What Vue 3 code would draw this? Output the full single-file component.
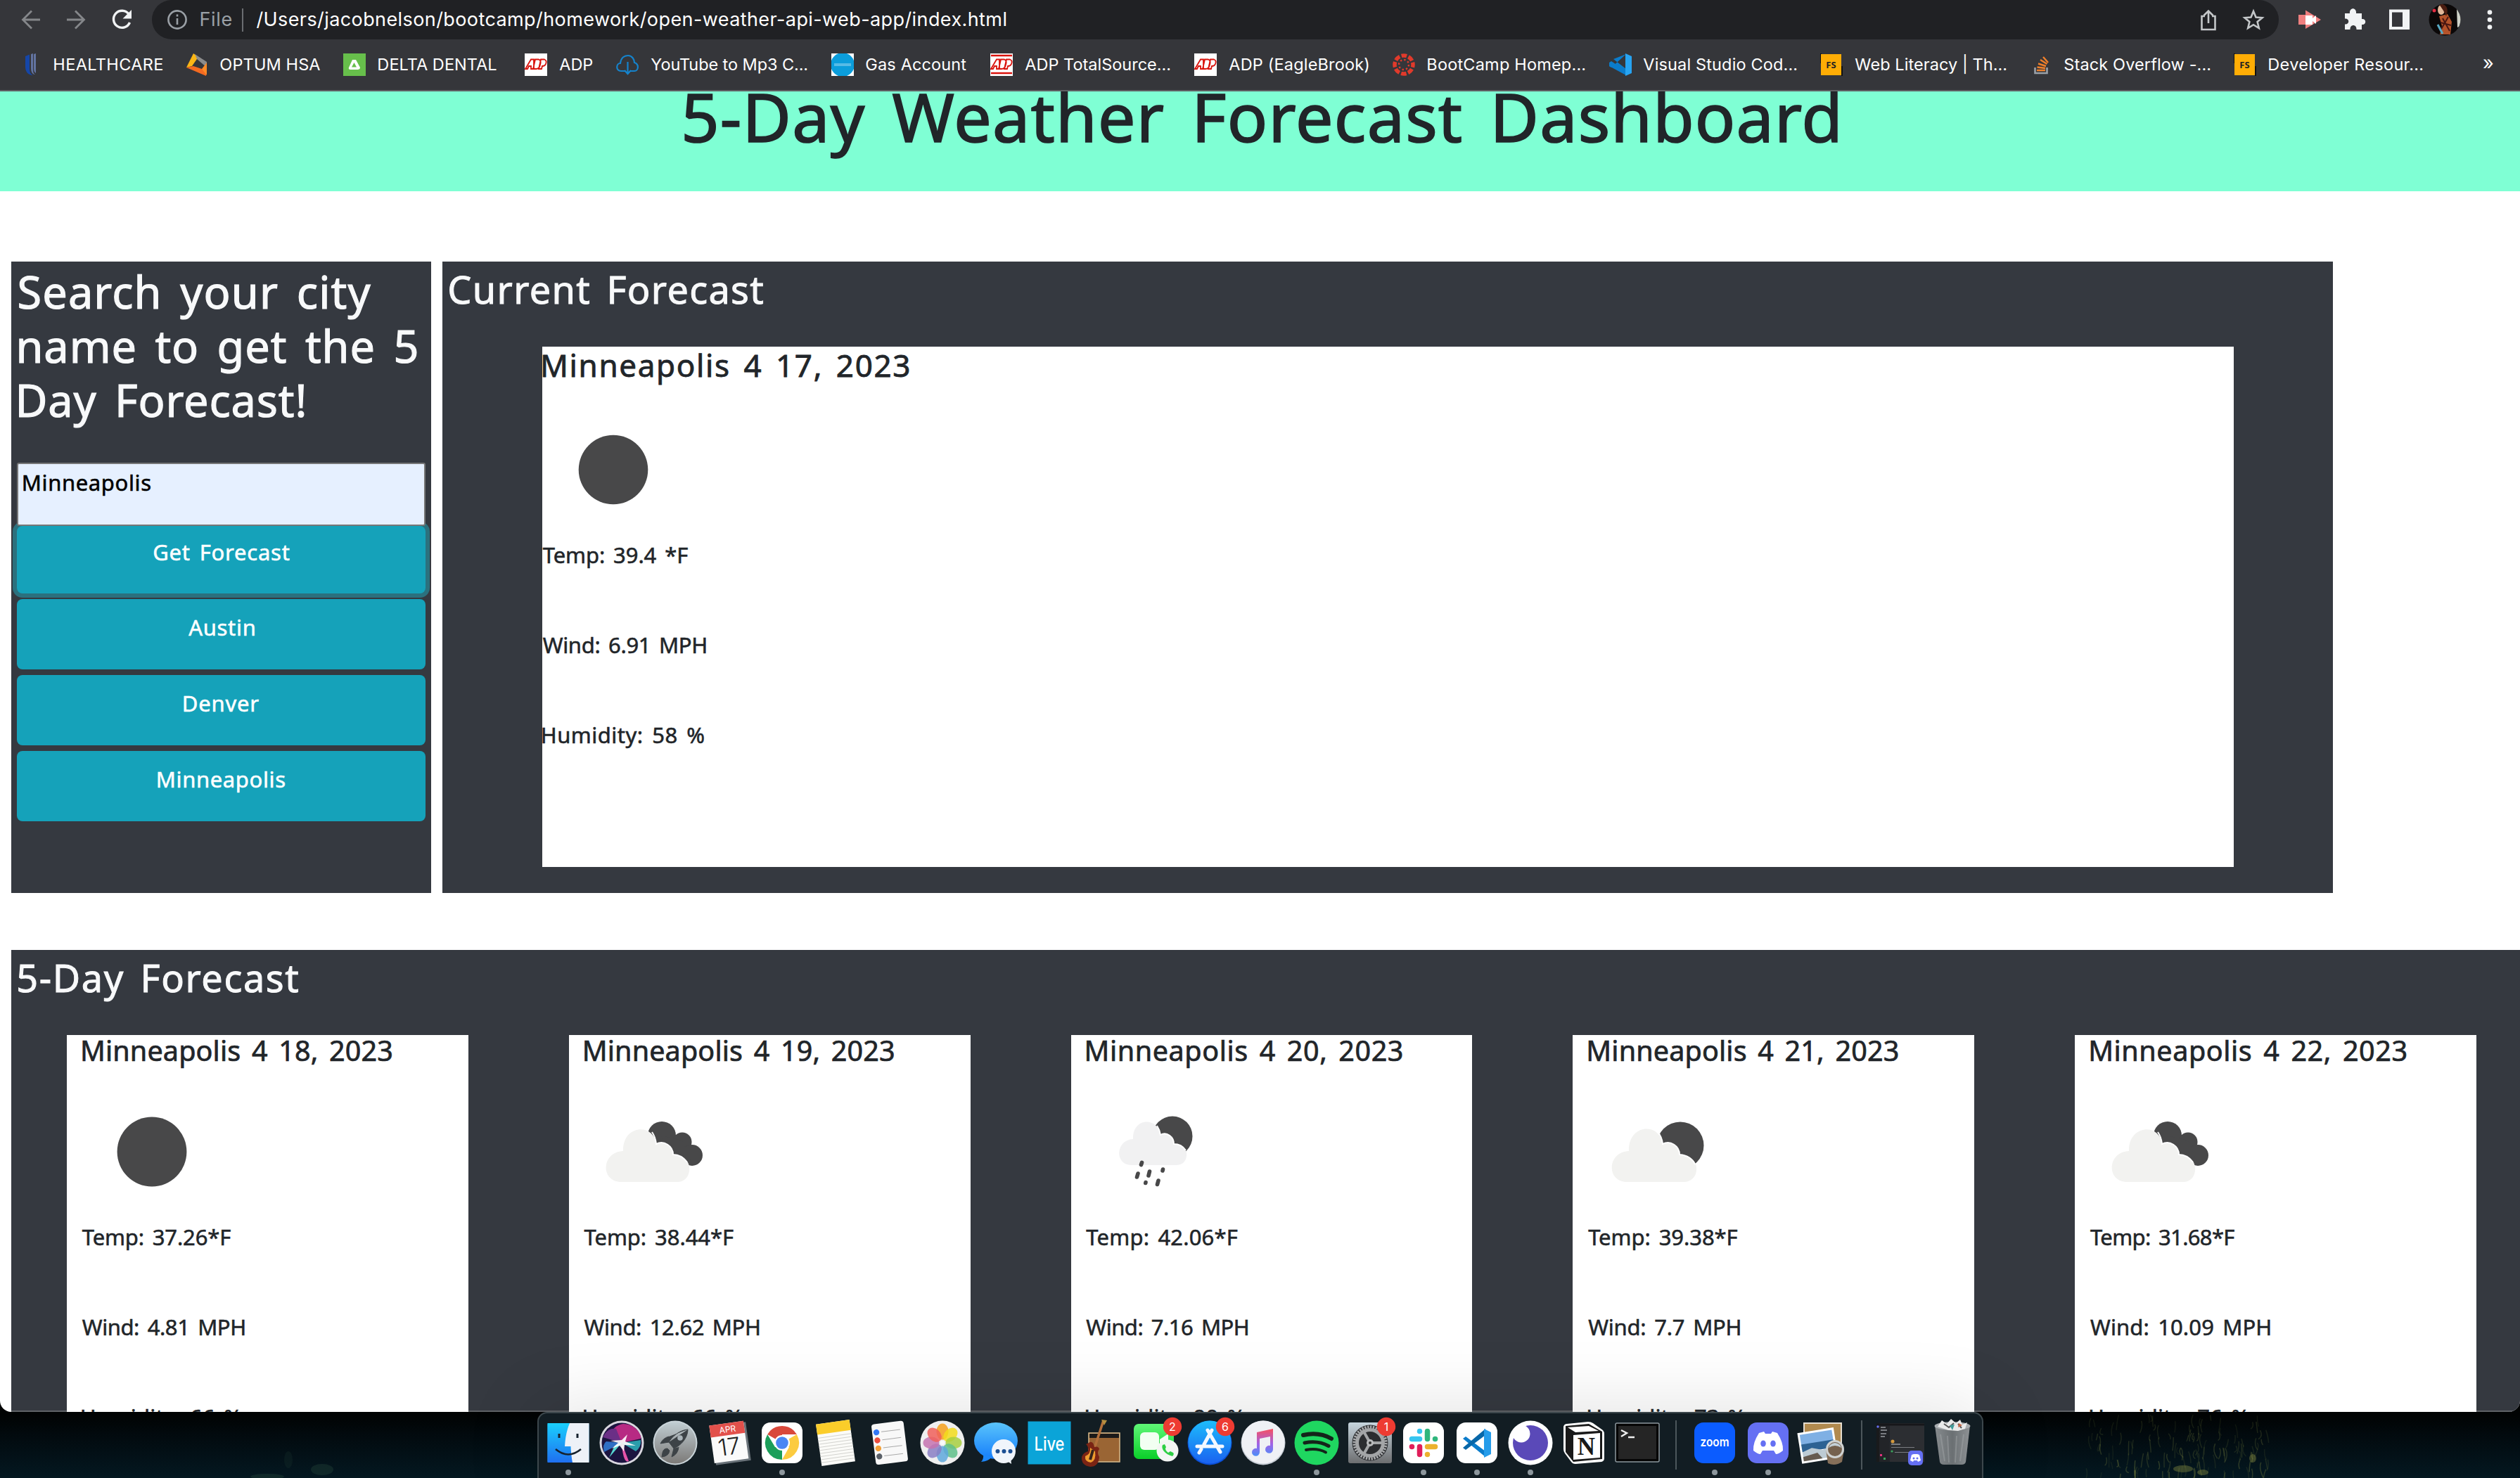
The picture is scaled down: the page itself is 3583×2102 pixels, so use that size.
<script setup>
// v-fit="px": spaces the letters so that the drawn text spans exactly that width
const ctx = document.createElement('canvas').getContext('2d')
const vFit = {
  mounted(el, { value }) {
    const cs = getComputedStyle(el)
    const text = el.textContent.trim()
    ctx.font = `${cs.fontWeight} ${cs.fontSize} ${cs.fontFamily}`
    const m = ctx.measureText(text)
    const gaps = (text.split(' ').length - 1) * (parseFloat(cs.wordSpacing) || 0)
    const stroke = parseFloat(cs.webkitTextStrokeWidth) || 0
    const ink = m.actualBoundingBoxLeft + m.actualBoundingBoxRight + gaps + stroke
    el.style.letterSpacing = `${(value - ink) / (text.length - 1)}px`
    el.style.textIndent = `${m.actualBoundingBoxLeft + stroke / 2 + parseFloat(cs.fontSize) * 0.015}px`
    el.style.width = `${value}px`
  },
}

const bookmarks = [
  { icon: 'uhc', text: 'HEALTHCARE', x: 28, tx: 77, w: 154 },
  { icon: 'optum', text: 'OPTUM HSA', x: 263, tx: 313, w: 142 },
  { icon: 'delta', text: 'DELTA DENTAL', x: 488, tx: 538, w: 168 },
  { icon: 'adp', text: 'ADP', x: 746, tx: 795, w: 47 },
  { icon: 'cloud', text: 'YouTube to Mp3 C...', x: 876, tx: 925, w: 222 },
  { icon: 'gas', text: 'Gas Account', x: 1182, tx: 1231, w: 143 },
  { icon: 'adpts', text: 'ADP TotalSource...', x: 1408, tx: 1457, w: 206 },
  { icon: 'adp', text: 'ADP (EagleBrook)', x: 1698, tx: 1747, w: 199 },
  { icon: 'canvas', text: 'BootCamp Homep...', x: 1980, tx: 2030, w: 223 },
  { icon: 'vscode', text: 'Visual Studio Cod...', x: 2288, tx: 2336, w: 218 },
  { icon: 'fs', text: 'Web Literacy | Th...', x: 2588, tx: 2637, w: 215 },
  { icon: 'stack', text: 'Stack Overflow -...', x: 2887, tx: 2935, w: 207 },
  { icon: 'fs', text: 'Developer Resour...', x: 3176, tx: 3226, w: 218 },
].map((b, i, all) => ({
  ...b,
  before: b.x - (i ? all[i - 1].tx + all[i - 1].w : 0),
  gap: b.tx - b.x - 32,
}))

const history = [
  { name: 'Austin', w: 94 },
  { name: 'Denver', w: 107 },
  { name: 'Minneapolis', w: 181 },
]

const days = [
  { date: 'Minneapolis 4 18, 2023', dw: 441, icon: 'clear', temp: 'Temp: 37.26*F', tw: 212, wind: 'Wind: 4.81 MPH', ww: 231, hum: 'Humidity: 66 %', hw: 227 },
  { date: 'Minneapolis 4 19, 2023', dw: 441, icon: 'broken', temp: 'Temp: 38.44*F', tw: 213, wind: 'Wind: 12.62 MPH', ww: 249, hum: 'Humidity: 66 %', hw: 226 },
  { date: 'Minneapolis 4 20, 2023', dw: 450, icon: 'rain', temp: 'Temp: 42.06*F', tw: 216, wind: 'Wind: 7.16 MPH', ww: 230, hum: 'Humidity: 90 %', hw: 226 },
  { date: 'Minneapolis 4 21, 2023', dw: 441, icon: 'few', temp: 'Temp: 39.38*F', tw: 213, wind: 'Wind: 7.7 MPH', ww: 216, hum: 'Humidity: 73 %', hw: 224 },
  { date: 'Minneapolis 4 22, 2023', dw: 450, icon: 'broken', temp: 'Temp: 31.68*F', tw: 206, wind: 'Wind: 10.09 MPH', ww: 256, hum: 'Humidity: 76 %', hw: 226 },
]

const dock = [
  { n: 'finder', on: true }, { n: 'siri' }, { n: 'launchpad' }, { n: 'calendar' },
  { n: 'chrome', on: true }, { n: 'notes' }, { n: 'reminders' }, { n: 'photos' },
  { n: 'messages' }, { n: 'live' }, { n: 'garage' }, { n: 'facetime', badge: '2', bx: 23 },
  { n: 'appstore', badge: '6', bx: 22 }, { n: 'music' }, { n: 'spotify', on: true },
  { n: 'settings', badge: '1', bx: 23 }, { n: 'slack', on: true }, { n: 'vscode', on: true },
  { n: 'insomnia', on: true }, { n: 'notion' }, { n: 'terminal' }, { n: 'sep', cell: 34 },
  { n: 'zoom', on: true }, { n: 'discord', on: true }, { n: 'preview' }, { n: 'sep', cell: 38 },
  { n: 'thumb', cell: 72 }, { n: 'trash' },
]

const petals = ['#f6a01c', '#f2dc1b', '#a8cf3f', '#5fc08a', '#5fa8dc', '#8a7fc4', '#c673b0', '#f0605a']
const range = (n) => Array.from({ length: n }, (_, i) => i)

// deterministic blades of grass for the wallpaper
const blades = range(130).map((i) => {
  const r = (k) => { const v = Math.sin(i * 12.9898 + k * 78.233) * 43758.5453; return v - Math.floor(v) }
  const x = 2965 + r(1) * 260
  const y = 2010 + r(2) * 86
  return { d: `M${x} ${y}q${(r(3) - 0.5) * 10} ${5 + r(4) * 6} ${(r(5) - 0.5) * 8} ${8 + r(6) * 14}`, o: 0.12 + r(7) * 0.3 * ((y - 1980) / 110) }
})
</script>

<template>
  <div class="desktop">
    <svg class="wallpaper" width="3583" height="110" viewBox="0 1992 3583 110">
      <g fill="none" stroke="#77803f" stroke-width="1.500">
        <path v-for="(b, i) in blades" :key="i" :d="b.d" :opacity="b.o" />
      </g>
      <g fill="#27493c" opacity=".35">
        <ellipse cx="458" cy="2090" rx="16" ry="8" /><ellipse cx="380" cy="2100" rx="24" ry="4" />
        <ellipse cx="410" cy="2076" rx="6" ry="12" opacity=".5" />
      </g>
      <g fill="#8a8f42" opacity=".4">
        <ellipse cx="3104" cy="2089" rx="14" ry="5" /><ellipse cx="3132" cy="2094" rx="8" ry="4" />
        <ellipse cx="3203" cy="2074" rx="5" ry="6" />
      </g>
    </svg>

    <div class="window">
      <div class="chrome">
        <div class="toolbar">
          <svg class="nav" width="216" height="56" viewBox="0 1 216 56" fill="none" stroke-width="2.8">
            <path d="M57 29H33M45 16.500L32.500 29L45 41.500" stroke="#85878a" />
            <path d="M95 29H119M107 16.500L119.500 29L107 41.500" stroke="#85878a" />
            <path d="M183 21A12 12 0 1 0 184.500 33" stroke="#f1f3f4" stroke-width="3.400" />
            <path d="M187 15V27.500H174.500Z" fill="#f1f3f4" />
          </svg>
          <div class="omnibox">
            <svg class="info" width="32" height="32" viewBox="-16 -16 32 32" fill="none" stroke="#9aa0a6" stroke-width="2.6">
              <circle r="12.600" /><path d="M0 -2V7M0 -7.500V-4.500" />
            </svg>
            <span v-fit="44" class="scheme">File</span>
            <i class="bar"></i>
            <span v-fit="1066" class="url">/Users/jacobnelson/bootcamp/homework/open-weather-api-web-app/index.html</span>
            <svg class="actions" width="120" height="56" viewBox="3120 1 120 56" fill="none" stroke="#c4c7c9" stroke-width="2.6">
              <path d="M3135 24H3130.500V43H3149.500V24H3145M3140 34V17M3133.500 23L3140 16.500L3146.500 23" />
              <path d="M3204 17L3207.500 25.500L3216.500 26.200L3209.600 32L3211.800 41L3204 36.200L3196.200 41L3198.400 32L3191.500 26.200L3200.500 25.500Z" />
            </svg>
          </div>
          <svg class="tools" width="343" height="56" viewBox="3240 1 343 56">
            <path d="M3268 22H3278V15.500L3300 29L3278 42V36H3268Z" fill="#f07f7f" />
            <path d="M3278 23H3288V27L3293 23V35L3288 31V36H3278Z" fill="#fff" />
            <path d="M3334 20H3341C3340 11 3351 11 3350 20H3358V28C3365 27 3365 37 3358 36V43H3350.500C3351 35 3341 35 3341.500 43H3334V35.500C3341 36 3341 27 3334 27.500Z" fill="#f1f3f4" />
            <path d="M3397 14.500H3426V43H3397ZM3401 18.500V39H3416V18.500Z" fill="#f1f3f4" fill-rule="evenodd" />
            <g clip-path="url(#face)">
              <rect x="3453" y="5" width="46" height="48" fill="#0b0808" />
              <path d="M3493 12L3499 20V38L3494 40Z" fill="#cfd2c8" />
              <path d="M3468 24L3480 21L3486 32L3484 50H3469L3472 38Z" fill="#b4532a" />
              <path d="M3473 27L3483 45M3481 25L3470 44M3470 33L3485 37" stroke="#4a1712" stroke-width="2" />
              <ellipse cx="3471" cy="15" rx="5" ry="7" fill="#e2b89a" />
              <path d="M3468 7C3477 5 3483 13 3478 24L3474 16Z" fill="#4a1d11" />
              <path d="M3466 36L3473 49" stroke="#58a9c4" stroke-width="3" />
              <circle cx="3461" cy="16" r="2.500" fill="#e42c43" />
            </g>
            <clipPath id="face"><circle cx="3476" cy="29" r="22.500" /></clipPath>
            <g fill="#f1f3f4"><circle cx="3540" cy="18.500" r="3.300" /><circle cx="3540" cy="29" r="3.300" /><circle cx="3540" cy="39.500" r="3.300" /></g>
          </svg>
        </div>

        <div class="bookmarks">
          <div v-for="(b, i) in bookmarks" :key="i" class="bookmark" :style="{ marginLeft: b.before + 'px' }">
            <svg width="32" height="32" viewBox="0 0 32 32" :style="{ marginRight: b.gap + 'px' }">
              <template v-if="b.icon === 'uhc'">
                <path d="M8 4L14 1.500V21C14 27 16 30 19 31C12 31 8 26 8 19Z" fill="#1546a8" />
                <path d="M16 1L19 0V23C19 27 20 29 22 30C18 30 16 26 16 21ZM20 1L23 0V28C21 27 20 25 20 22Z" fill="#6273a0" />
              </template>
              <template v-else-if="b.icon === 'optum'">
                <path d="M12 0L19 5L10 18L2 20Z" fill="#fbb615" /><path d="M14 1L31 12V20L17 8Z" fill="#8c8c8c" />
                <path d="M2 20L12 18L30 24V32Z" fill="#f36a21" /><path d="M31 13V31L24 22Z" fill="#ff8b25" />
              </template>
              <template v-else-if="b.icon === 'delta'">
                <rect width="32" height="32" fill="#67bf4b" /><path d="M13 9H18L24 20Q24 23 20 23H10Q7 23 8 20ZM15.500 13L12 19.500H19Z" fill="#fff" fill-rule="evenodd" />
              </template>
              <template v-else-if="b.icon === 'adp' || b.icon === 'adpts'">
                <rect width="32" height="32" fill="#fff" />
                <g fill="none" stroke="#d9130c" stroke-width="1.800">
                  <path d="M1 22L9 8.500H13V22H9V18H6L4 22ZM12 22L15 8.500H20Q24 10 22 16Q21 22 16 22ZM20 22L23 8.500H28Q32 10 30 15Q29 18 25 18L24 22Z" />
                  <path v-if="b.icon === 'adpts'" d="M1 3H31M1 28H31" stroke-width="2.400" />
                </g>
              </template>
              <path v-else-if="b.icon === 'cloud'" d="M12 25H7C-1 25 0 14 6 14C7 5 13 3 17 3C23 3 26 9 26 13C33 15 32 25 26 25H21M16.500 12V28M12 24L16.500 29L21 24" fill="none" stroke="#1583cc" stroke-width="2.200" />
              <template v-else-if="b.icon === 'gas'">
                <rect width="32" height="32" fill="#fff" /><circle cx="16" cy="16" r="17" fill="#0b9ddb" /><path d="M4 14H28V18H4Z" fill="#57bbe6" />
              </template>
              <g v-else-if="b.icon === 'canvas'" fill="#e13a2b">
                <circle cx="16" cy="16" r="13" fill="none" stroke="#e13a2b" stroke-width="5.500" stroke-dasharray="7.600 2.610" stroke-dashoffset="3.800" />
                <circle cx="16" cy="16" r="7" fill="none" stroke="#e13a2b" stroke-width="2.400" stroke-dasharray="2.400 3.100" />
              </g>
              <template v-else-if="b.icon === 'vscode'">
                <path d="M24 1L3 20L0 18V14L3 12L24 31V22L6 8Z" fill="#0b7ccb" /><path d="M0 13L3 11L24 25V31L0 18Z" fill="#0b7ccb" />
                <path d="M23 0L32 4V28L23 32Z" fill="#27a4f2" />
              </template>
              <template v-else-if="b.icon === 'fs'">
                <path d="M1 0V14M31 18V32" stroke="#111" stroke-width="2" /><rect x="1" y="1" width="29" height="30" fill="#ffad05" />
                <text x="15.500" y="20.500" font-size="13" font-weight="700" text-anchor="middle" fill="#222" font-family="Noto Sans, sans-serif">FS</text>
              </template>
              <template v-else>
                <path d="M6.500 20V28H23.500V20" fill="none" stroke="#9aa1a8" stroke-width="2.600" />
                <path d="M9 24H21M9.500 19.500L21 21M11 14.500L22 18M14 9L23.500 15M18 5L25 13" stroke="#f0802b" stroke-width="2.400" />
              </template>
            </svg>
            <span v-fit="b.w" class="bm-text">{{ b.text }}</span>
          </div>
          <span class="more">»</span>
        </div>
      </div>

      <header class="banner"><h1 v-fit="1641">5-Day Weather Forecast Dashboard</h1></header>

      <main class="top">
        <aside class="search">
          <h2>
            <span v-fit="501">Search your city</span>
            <span v-fit="566">name to get the 5</span>
            <span v-fit="406">Day Forecast!</span>
          </h2>
          <div class="field"><span v-fit="181">Minneapolis</span></div>
          <div class="btn primary"><span v-fit="194">Get Forecast</span></div>
          <div v-for="h in history" :key="h.name" class="btn"><span v-fit="h.w">{{ h.name }}</span></div>
        </aside>
        <section class="current">
          <h3 v-fit="447">Current Forecast</h3>
          <div class="current-card">
            <h4 v-fit="521">Minneapolis 4 17, 2023</h4>
            <svg class="wx" width="200" height="200" viewBox="-100 -100 200 200"><circle cx="1" r="49.300" fill="#484849" /></svg>
            <p v-fit="207">Temp: 39.4 *F</p>
            <p v-fit="232">Wind: 6.91 MPH</p>
            <p v-fit="230">Humidity: 58 %</p>
          </div>
        </section>
      </main>

      <section class="five">
        <h3 v-fit="399">5-Day Forecast</h3>
        <div class="cards">
          <article v-for="d in days" :key="d.date" class="card">
            <h4 v-fit="d.dw">{{ d.date }}</h4>
            <svg class="wx" width="200" height="200" viewBox="-100 -100 200 200">
              <circle v-if="d.icon === 'clear'" r="49.400" fill="#484849" />
              <template v-else-if="d.icon === 'broken'">
                <g fill="#484849"><circle cx="11" cy="-23" r="20" /><circle cx="40" cy="-14" r="13.500" /><circle cx="54" cy="5" r="15" /><path d="M10 -23L40 -16L52 12L45 20L20 10Z" /></g>
                <path d="M-46 43C-77 43 -75 0 -44 -1C-45 -39 0 -41 3 -11C14 -17 27 -8 27 4C39 4 52 12 50 27C49 37 42 43 33 43Z" fill="#f2f2f0" />
                <path d="M-3 -28Q2 -21 3 -11C14 -17 27 -8 27 4C35 4 42 8 47 15" fill="none" stroke="#fff" stroke-width="2" />
              </template>
              <template v-else-if="d.icon === 'few'">
                <circle cx="32" cy="-9" r="33.500" fill="#484849" />
                <path d="M-43 43C-74 43 -72 0 -41 -1C-42 -40 3 -42 7 -11C18 -17 31 -8 31 4C43 4 57 12 55 27C54 37 46 43 37 43Z" fill="#f2f2f0" />
                <path d="M0 -28Q6 -21 7 -11C18 -17 31 -8 31 4C42 5 49 9 53 18" fill="none" stroke="#fff" stroke-width="2" />
              </template>
              <template v-else>
                <circle cx="23" cy="-22" r="28.500" fill="#484849" />
                <path d="M-35 19C-60 19 -58 -17 -33 -18C-34 -49 2 -50 6 -24C15 -29 25 -21 25 -11C35 -11 45 -3 43 6C42 15 36 19 28 19Z" fill="#f1f1f2" />
                <path d="M1 -37Q5 -31 6 -24C15 -29 25 -21 25 -11C32 -11 38 -8 42 -2" fill="none" stroke="#fff" stroke-width="2" />
                <path d="M-20.500 15.500L-21.500 18.500M-26 31L-27.500 36M-9.500 28L-11 34M9.500 25L9 27M-15 43.500L-15.200 44.500M3 41L1.500 46.500" stroke="#484849" stroke-width="5.600" stroke-linecap="round" />
              </template>
            </svg>
            <p v-fit="d.tw">{{ d.temp }}</p>
            <p v-fit="d.ww">{{ d.wind }}</p>
            <p v-fit="d.hw">{{ d.hum }}</p>
          </article>
        </div>
      </section>
    </div>

    <nav class="dock">
      <div v-for="(a, i) in dock" :key="i" class="app" :style="{ width: (a.cell || 76) + 'px' }">
        <i v-if="a.n === 'sep'" class="sep"></i>
        <svg v-else width="76" height="92" viewBox="-38 -42 76 92">
          <template v-if="a.n === 'finder'">
            <rect x="-29.500" y="-28" width="59" height="56" rx="2" fill="#1d9bf6" />
            <path d="M-29.500 -28H2L-5 4H3L6 28H-29.500Z" fill="url(#gFinder)" />
            <path d="M2 -28H29.500V28H6Q4 18 3.500 5H-5Q-4 -14 2 -28Z" fill="#edf1f7" />
            <path d="M-13 -13V-7M13 -13V-7" stroke="#16222e" stroke-width="3" /><path d="M-18 9Q0 24 18 9" fill="none" stroke="#16222e" stroke-width="2.600" />
          </template>
          <template v-else-if="a.n === 'siri'">
            <circle r="31.500" fill="#d9d7df" /><circle r="28.500" fill="#1c1440" />
            <path d="M0 0C-22 -6 -16 -24 2 -27C18 -27 28 -14 27 -6Z" fill="#b72a83" /><path d="M0 0L-27 -8Q-20 -22 -8 -20Z" fill="#6b2f86" />
            <path d="M0 0L27 -4Q28 6 20 12Z" fill="#2a9dab" /><path d="M0 0L-25 13Q-28 2 -22 -2Z" fill="#2f6fc4" />
            <path d="M0 0L10 26Q2 30 0 0" fill="#e653a9" /><path d="M0 0L-18 21L-10 4Z" fill="#58d8d2" /><path d="M-16 -3L0 -4L8 -12L5 -2L20 4L4 3L3 12L-3 4L-14 8L-5 0Z" fill="#fff" opacity=".9" />
          </template>
          <template v-else-if="a.n === 'launchpad'">
            <circle r="31.500" fill="#c9d4d9" /><circle r="29.500" fill="url(#gGrey)" />
            <path d="M18 -19C5 -18 -5 -8 -9 -1L-21 1Q-17 -7 -9 -9M-9 -1L-2 8C8 4 18 -7 18 -19M-2 8L-5 20Q4 16 5 6M-11 8C-18 8 -18 14 -19 20Q-9 19 -8 11Z" fill="#3d4347" stroke="#3d4347" />
            <circle cx="7" cy="-7" r="3.800" fill="#aab4b9" />
          </template>
          <g v-else-if="a.n === 'calendar'" transform="rotate(-8)">
            <rect x="-22" y="-26" width="50" height="55" fill="#697279" /><rect x="-24" y="-28" width="49" height="54" fill="#fafafa" />
            <rect x="-24" y="-28" width="49" height="17" fill="#e2504b" />
            <text x="1" y="-15" font-size="12" text-anchor="middle" fill="#fff">APR</text>
            <text x="0" y="17" font-size="33" font-weight="300" text-anchor="middle" fill="#222">17</text>
          </g>
          <template v-else-if="a.n === 'chrome'">
            <rect x="-29" y="-29" width="58" height="58" rx="12" fill="#fff" />
            <path d="M0 0L-20.800 -12A24 24 0 0 1 20.800 -12H0Z" fill="#d9483b" />
            <path d="M0 0L20.800 -12A24 24 0 0 1 0 24L10 6Z" fill="#fccb3f" />
            <path d="M0 0L0 24A24 24 0 0 1 -20.800 -12L-10 6L10 6Z" fill="#1b9e5a" />
            <circle r="11" fill="#fff" /><circle r="8.800" fill="#4a86f4" />
          </template>
          <g v-else-if="a.n === 'notes'" transform="rotate(-8)">
            <rect x="-24" y="-30" width="48" height="60" fill="#fbfbf8" /><rect x="-24" y="-30" width="48" height="15" fill="#fbcd2a" />
            <path v-for="k in range(9)" :key="k" :d="`M-24 ${-10 + k * 4.400}H24`" stroke="#d0d0cc" stroke-width=".9" />
          </g>
          <g v-else-if="a.n === 'reminders'" transform="rotate(-7)">
            <rect x="-22" y="-29" width="46" height="58" rx="4" fill="#f8f8f8" />
            <g v-for="(c, k) in ['#3478f6', '#eb4d3d', '#f19f38', '#5a6068']" :key="k"><circle cx="-16" :cy="-17 + k * 11.500" r="4.200" :fill="c" /><path :d="`M-9 ${-17 + k * 11.500}H18`" stroke="#a9a9a9" /></g>
          </g>
          <template v-else-if="a.n === 'photos'">
            <circle r="31.500" fill="#efefef" />
            <ellipse v-for="(c, k) in petals" :key="c" cy="-16" rx="8.500" ry="11.500" :fill="c" opacity=".85" :transform="`rotate(${k * 45})`" />
            <circle r="3" fill="#fff" opacity=".7" />
          </template>
          <template v-else-if="a.n === 'messages'">
            <ellipse cy="-3" rx="31" ry="26" fill="url(#gBlue)" /><path d="M-18 16Q-17 23 -21 27Q-10 26 -6 20Z" fill="#1c87fb" />
            <circle cx="11" cy="12" r="17" fill="#f0f5fb" /><path d="M16 26L22 30L21 22Z" fill="#f0f5fb" />
            <g fill="#1b4f93"><circle cx="2.500" cy="12" r="3" /><circle cx="11.500" cy="12" r="3" /><circle cx="20.500" cy="12" r="3" /></g>
          </template>
          <template v-else-if="a.n === 'live'">
            <rect x="-30.500" y="-30.500" width="61" height="61" fill="#0ba4d8" />
            <text y="11" font-size="27" font-weight="500" text-anchor="middle" fill="#fff" textLength="43" lengthAdjust="spacingAndGlyphs">Live</text>
          </template>
          <template v-else-if="a.n === 'garage'">
            <rect x="-20" y="-14" width="44" height="41" fill="#9a6534" stroke="#d8bb8c" stroke-width="1.500" /><rect x="-19" y="-13" width="42" height="6" fill="#1c1a19" />
            <path d="M-12 8L1 -32" stroke="#b3703b" stroke-width="3.500" /><path d="M-2 -33L6 -32L2 -25Z" fill="#b58f3f" />
            <path d="M-20 0Q-14 -4 -12 6Q-6 4 -5 9Q-9 13 -5 20Q-6 34 -18 34Q-31 32 -30 20Q-28 14 -21 12Q-20 5 -24 2Z" fill="#7a2414" />
            <path d="M-18 7L-11 12Q-9 25 -17 28Q-26 27 -25 19Q-17 16 -18 7Z" fill="#ee9c2f" />
            <path d="M-14 10L-18 24" stroke="#36241c" stroke-width="4" />
          </template>
          <template v-else-if="a.n === 'facetime'">
            <rect x="-32" y="-27" width="57" height="50" rx="7" fill="url(#gGreen)" /><rect x="-23" y="-15" width="27" height="25" rx="6" fill="#f2fff2" /><path d="M5 -5L17 -13V6L5 0Z" fill="#f2fff2" />
            <circle cx="16" cy="11" r="15.500" fill="#f4f6f4" /><path d="M9 3Q7 7 11 12T23 19Q26 16 24 14L20 12L17 14Q13 11 13 8L14 6L12 2Z" fill="#2fcf45" />
          </template>
          <template v-else-if="a.n === 'appstore'">
            <circle r="31.500" fill="#0a4fd8" /><circle cy="-1" r="30.500" fill="url(#gStore)" />
            <path d="M-3 -18L15 13M3 -18L-8 2M-18 5H18M-12 9L-15 14" stroke="#f4f8ff" stroke-width="5" stroke-linecap="round" />
          </template>
          <template v-else-if="a.n === 'music'">
            <circle r="31.500" fill="#c5ccd4" /><circle cy="-1" r="30.500" fill="#eff1f5" />
            <path d="M-9 -15L14 -20V9A5.500 5.500 0 1 1 10 4V-9L-5 -6V13A5.500 5.500 0 1 1 -9 8Z" fill="url(#gMusic)" />
          </template>
          <template v-else-if="a.n === 'spotify'">
            <circle r="31.500" fill="#1fd760" /><g fill="none" stroke="#14241a" stroke-linecap="round"><path d="M-19 -11Q3 -16 21 -6" stroke-width="6" /><path d="M-17 0Q2 -4 17 4.500" stroke-width="5" /><path d="M-15 10Q1 7 13 13.500" stroke-width="4" /></g>
          </template>
          <template v-else-if="a.n === 'settings'">
            <rect x="-31" y="-29" width="62" height="58" rx="3" fill="url(#gSet)" /><circle r="25.500" fill="#2b2d30" />
            <circle r="22.500" fill="none" stroke="#a9abad" stroke-width="4" stroke-dasharray="2.400 1.500" /><circle r="18.500" fill="none" stroke="#a3a5a7" stroke-width="5" />
            <path d="M0 0L17 0M0 0L-9 -16M0 0L-9 16" stroke="#a3a5a7" stroke-width="4" /><circle r="5" fill="#b9bbbd" /><circle r="2" fill="#333" />
          </template>
          <template v-else-if="a.n === 'slack'">
            <rect x="-29" y="-29" width="58" height="58" rx="13" fill="#fff" />
            <g stroke-width="7.500" stroke-linecap="round">
              <path d="M-5.500 -5.500H-16.500M-5.500 -16.500V-16.400" stroke="#36c5f0" /><path d="M5.500 -5.500V-16.500M16.500 -5.500H16.600" stroke="#2eb67d" />
              <path d="M5.500 5.500H16.500M5.500 16.500V16.600" stroke="#ecb22e" /><path d="M-5.500 5.500V16.500M-16.500 5.500H-16.600" stroke="#e01e5a" />
            </g>
          </template>
          <template v-else-if="a.n === 'vscode'">
            <rect x="-29" y="-29" width="58" height="58" rx="13" fill="#fff" />
            <path d="M-20 -6L-16 -9L12 12V20Z" fill="#0b7ccb" /><path d="M-20 7L-16 10L12 -11V-20Z" fill="#0867a8" /><path d="M10 -20L20 -15V16L10 21Z" fill="#259cea" />
          </template>
          <template v-else-if="a.n === 'insomnia'">
            <circle r="31.500" fill="#fff" /><circle r="25" fill="#5a49b8" /><circle cx="-13" cy="-13" r="12.500" fill="#fff" />
          </template>
          <template v-else-if="a.n === 'notion'">
            <path d="M-29 -23Q-28 -27 -24 -27L6 -30Q10 -30 13 -28L27 -18Q29 -16 29 -12V22Q29 26 25 27L-12 30Q-16 30 -18 27L-27 15Q-29 12 -29 9Z" fill="#fff" />
            <path d="M-26 -24L7 -27L26 -16L26 23L-15 27L-26 13Z" fill="#191919" /><path d="M-23 -22L7 -24L21 -17L-12 -15Z" fill="#fff" /><path d="M-15 -11L23 -14V21L-15 24Z" fill="#fff" />
            <text x="3.500" y="17" font-size="35" font-weight="700" text-anchor="middle" fill="#191919" font-family="Liberation Serif, serif">N</text>
          </template>
          <template v-else-if="a.n === 'terminal'">
            <rect x="-31" y="-28" width="62" height="55" rx="2" fill="#050505" stroke="#8c979d" stroke-width="1.500" /><rect x="-27" y="-24" width="54" height="47" fill="#252525" />
            <path d="M-23 -18L-15 -14L-23 -9M-13 -8H-4" fill="none" stroke="#eee" stroke-width="2.400" />
          </template>
          <template v-else-if="a.n === 'zoom'">
            <rect x="-29" y="-29" width="58" height="58" rx="13" fill="#0b5cff" />
            <text y="5" font-size="18" font-weight="600" text-anchor="middle" fill="#fff" textLength="41" lengthAdjust="spacingAndGlyphs">zoom</text>
          </template>
          <template v-else-if="a.n === 'discord'">
            <rect x="-29" y="-29" width="58" height="58" rx="13" fill="#6570f3" />
            <path d="M-13 -14L-6 -16L-4 -13H4L6 -16L13 -14Q22 0 21 11Q15 16 11 16L8 11H-8L-11 16Q-15 16 -21 11Q-22 0 -13 -14Z" fill="#fff" /><ellipse cx="-7" cy="1" rx="3.800" ry="4.500" fill="#6570f3" /><ellipse cx="7" cy="1" rx="3.800" ry="4.500" fill="#6570f3" />
          </template>
          <template v-else-if="a.n === 'preview'">
            <rect x="-25" y="-28" width="53" height="40" fill="#b18a4e" stroke="#e5ddd0" stroke-width="2" />
            <g transform="rotate(-9)"><rect x="-32" y="-19" width="52" height="44" fill="#fff" /><rect x="-29" y="-16" width="46" height="16" fill="#7fb0e4" /><rect x="-29" y="-2" width="46" height="11" fill="#2d6293" /><path d="M-29 9L-15 5L0 10L17 6V22H-29Z" fill="#bdcbd4" /><path d="M-29 16L-8 13L-2 22H-29Z" fill="#665b50" /></g>
            <path d="M6 10L9 29Q19 34 29 27L32 10Z" fill="#86705a" /><circle cx="19" cy="9" r="13" fill="#cfd2d2" /><circle cx="19" cy="9" r="10" fill="#75614e" /><path d="M10 7Q19 1 28 7L26 3Q19 -3 12 3Z" fill="#c4d1d8" />
          </template>
          <template v-else-if="a.n === 'thumb'">
            <rect x="-34" y="-28" width="68" height="55" fill="#2c2e32" /><path d="M-34 -28H-30V27H-34Z" fill="#191a1c" /><path d="M-30 -28H-15V27H-30Z" fill="#222428" /><path d="M-34 -26H34" stroke="#16171a" stroke-width="3" />
            <g fill="#7a7d82"><path d="M-28 -23H-21V-21H-28ZM-28 -19H-19V-17H-28ZM-28 -14H-20V-12H-28ZM-28 -10H-22V-8H-28ZM-13 1H0V3H-13ZM-13 6H20V7H-13ZM-8 13H12V14H-8Z" /></g>
            <circle cx="-11" cy="-2" r="2.500" fill="#d59a3e" /><circle cx="-32" cy="-23" r="1.700" fill="#6570f3" /><circle cx="-12" cy="12" r="1.600" fill="#3ba55d" /><path d="M-29 16H-26V19H-29Z" fill="#e0327a" /><path d="M-24 21H-21V24H-24Z" fill="#3ba55d" />
            <rect x="11" y="11" width="21" height="21" rx="5" fill="#6570f3" /><path d="M16 17L19 16H24L27 17L29 25L25 27L24 25H19L18 27L14 25Z" fill="#fff" /><circle cx="19" cy="22" r="1.500" fill="#6570f3" /><circle cx="24" cy="22" r="1.500" fill="#6570f3" />
          </template>
          <template v-else>
            <path d="M-25 -25H25L19 27Q18 31 13 31H-12Q-17 31 -18 27Z" fill="url(#gTrash)" />
            <ellipse cy="-24" rx="25.500" ry="6" fill="#a9adb0" /><path d="M-21 -23L-15 -32L-8 -27L-2 -34L5 -28L11 -33L14 -26L21 -29L18 -20L8 -17L-6 -18Z" fill="#e9eaea" /><path d="M-12 -27L-5 -22L2 -28M8 -27L13 -21" stroke="#555" stroke-width="2" fill="none" /><path d="M-4 -25L0 -18L3 -26Z" fill="#3f9c9a" /><path d="M9 -28L14 -25L8 -22Z" fill="#c46545" />
            <path d="M-17 -12L-11 26M-7 -10L-5 28M6 -10L4 28M16 -12L11 26" stroke="#b1b5b7" stroke-width="2" opacity=".35" />
          </template>
          <g v-if="a.badge"><circle :cx="a.bx" cy="-23" r="13.200" fill="#ee3b32" /><text :x="a.bx" y="-17.500" font-size="16" text-anchor="middle" fill="#fff">{{ a.badge }}</text></g>
          <circle v-if="a.on" cy="42" r="4" fill="#8d979d" />
        </svg>
      </div>
    </nav>

    <svg width="0" height="0" class="defs">
      <defs>
        <linearGradient id="gFinder" x2="0" y2="1"><stop stop-color="#1ad0fd" /><stop offset="1" stop-color="#1f6ff0" /></linearGradient>
        <linearGradient id="gGrey" x2="0" y2="1"><stop stop-color="#c0cdd2" /><stop offset="1" stop-color="#7c7a78" /></linearGradient>
        <linearGradient id="gBlue" x2="0" y2="1"><stop stop-color="#5ac4fb" /><stop offset="1" stop-color="#157efb" /></linearGradient>
        <linearGradient id="gGreen" x2="0" y2="1"><stop stop-color="#5ff777" /><stop offset="1" stop-color="#0bcf29" /></linearGradient>
        <linearGradient id="gStore" x2="0" y2="1"><stop stop-color="#1dbcfc" /><stop offset="1" stop-color="#1a62f0" /></linearGradient>
        <linearGradient id="gMusic" x2="0" y2="1"><stop stop-color="#f8505f" /><stop offset=".55" stop-color="#a263e6" /><stop offset="1" stop-color="#4b8ef8" /></linearGradient>
        <linearGradient id="gSet" x2="0" y2="1"><stop stop-color="#c6d5de" /><stop offset="1" stop-color="#6d6e70" /></linearGradient>
        <linearGradient id="gTrash"><stop stop-color="#868b8e" /><stop offset=".5" stop-color="#6b7073" /><stop offset="1" stop-color="#8e9295" /></linearGradient>
      </defs>
    </svg>
  </div>
</template>

<style>
body { margin: 0; overflow: hidden; }
</style>

<style scoped>
* { box-sizing: border-box; }
h1, h2, h3, h4, p { margin: 0; font-weight: 400; }
.desktop {
  position: relative;
  width: 3583px;
  height: 2102px;
  overflow: hidden;
  background: linear-gradient(#010303 2012px, #020a0e 2040px, #041821 2102px);
  font-family: "Noto Sans", sans-serif;
  color: #212529;
}
.wallpaper { position: absolute; left: 0; bottom: 0; }
.defs { position: absolute; }
.window {
  position: relative;
  height: 2008px;
  overflow: hidden;
  background: #fff;
  border-radius: 0 0 16px 16px;
  white-space: nowrap;
}
.chrome { height: 130px; background: #35363a; border-bottom: 2px solid #606164; font-family: Inter, sans-serif; color: #fff; }
.toolbar { display: flex; height: 56px; }
.omnibox { display: flex; align-items: center; width: 3024px; height: 56px; border-radius: 28px; background: #202124; font-size: 27px; line-height: 56px; }
.info { margin: 0 17px 0 20px; flex: none; }
.scheme { color: #9aa0a6; flex: none; }
.bar { width: 2px; height: 33px; margin: 0 18px 0 15px; background: #6a6d71; flex: none; }
.url { flex: none; }
.actions { margin-left: auto; }
.bookmarks { display: flex; align-items: center; height: 72px; font-size: 23.5px; line-height: 40px; }
.bookmark { display: flex; align-items: center; flex: none; }
.bm-text { display: block; flex: none; }
.more { margin-left: 86px; font-size: 27px; line-height: 36px; position: relative; top: -2px; }
.banner, .window main, .five { word-spacing: .13em; }
.banner h1, .search span, h3, h4, p { -webkit-text-stroke: .018em currentColor; word-spacing: .13em; }
.banner { display: flex; justify-content: center; height: 142px; background: #7fffd4; overflow: hidden; }
.banner h1 { font-size: 95px; line-height: 70px; flex: none; }
.top { display: flex; gap: 16px; height: 898px; margin: 100px 0 81px 16px; }
.search { width: 597px; padding: 4px 8px 0; background: #353940; color: #f8f9fa; }
.search h2 { font-size: 63px; line-height: 77px; padding-left: 2px; }
.search h2 span { display: block; }
.field {
  position: relative;
  z-index: 1;
  height: 90px;
  margin-top: 51px;
  padding: 6px 0 0 7px;
  border: 2px solid #767676;
  border-radius: 3px;
  background: #e6f0ff;
  color: #000;
  font-size: 31px;
  line-height: 40px;
}
.field span { display: block; }
.btn {
  display: flex;
  justify-content: center;
  height: 100px;
  margin-top: 8px;
  padding-top: 20px;
  border-radius: 8px;
  background: #15a2ba;
  color: #fff;
  font-size: 31px;
  line-height: 40px;
}
.btn span { flex: none; }
.btn.primary { height: 96px; margin-top: 0; padding-top: 17px; box-shadow: 0 0 0 6px rgba(38, 143, 160, .65); }
.current { width: 2688px; padding-left: 9px; background: #353940; }
.current h3, .five h3 { color: #f8f9fa; font-size: 54px; line-height: 78px; }
.current-card { width: 2405px; height: 740px; margin: 43px 0 0 133px; background: #fff; }
.current-card h4 { font-size: 44px; line-height: 53px; }
.wx { display: block; margin-top: 22px; }
p { font-size: 31px; line-height: 44px; margin-bottom: 84px; }
.current-card p:first-of-type { margin-top: -1px; }
.five { height: 657px; margin-left: 16px; padding-left: 9px; background: #353940; border-bottom: 2px solid #5f6266; }
.cards { display: flex; gap: 143px; margin: 43px 0 0 70px; }
.card { flex: none; width: 570.800px; height: 640px; padding-left: 21px; background: #fff; }
.card h4 { font-size: 39.500px; line-height: 45px; }
.card .wx { margin-top: 21px; }
.card p:first-of-type { margin-top: -1px; }
.dock {
  position: absolute;
  left: 764px;
  top: 2008px;
  display: flex;
  width: 2056px;
  height: 110px;
  padding: 0 4px;
  border: 2px solid #3c474c;
  border-radius: 14px;
  background: #121d23;
  box-shadow: 0 0 110px rgba(0, 0, 0, .13);
  font-family: Inter, sans-serif;
}
.app { display: flex; justify-content: center; flex: none; }
.app svg { flex: none; }
.sep { width: 2px; height: 70px; margin-top: 10px; background: #4c565b; }
</style>
